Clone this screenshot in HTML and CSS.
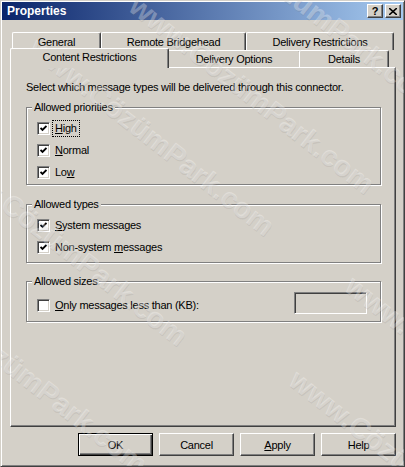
FILE: index.html
```html
<!DOCTYPE html>
<html lang="en">
<head>
	<meta charset="utf-8" />
	<title>Properties</title>
	<link rel="stylesheet" href="styles.css">
</head>
<body>
	<div class="window">
		<div class="titlebar">
			<span class="title">Properties</span>
			<span class="caption-btns">
				<span class="cap-btn">?</span>
				<span class="cap-btn cap-close">
					<svg viewBox="0 0 8 7" width="8" height="7"><path d="M0 0 L8 7 M8 0 L0 7" stroke="#000" stroke-width="1.6"/></svg>
				</span>
			</span>
		</div>

		<div class="tabs">
			<div class="tab-row back">
				<div class="tab" style="width:89px">General</div>
				<div class="tab" style="width:145px">Remote Bridgehead</div>
				<div class="tab" style="width:148px">Delivery Restrictions</div>
			</div>
			<div class="tab-row front">
				<div class="tab selected" style="width:159px">Content Restrictions</div>
				<div class="tab" style="width:134px">Delivery Options</div>
				<div class="tab" style="width:90px">Details</div>
			</div>
		</div>

		<div class="panel">
			<p class="intro">Select which message types will be delivered through this connector.</p>

			<div class="group g-priorities">
				<div class="group-title">Allowed priorities</div>
				<div class="check-row"><span class="checkbox on"></span><span class="label focus"><u>H</u>igh</span></div>
				<div class="check-row"><span class="checkbox on"></span><span class="label"><u>N</u>ormal</span></div>
				<div class="check-row"><span class="checkbox on"></span><span class="label">Lo<u>w</u></span></div>
			</div>

			<div class="group g-types">
				<div class="group-title">Allowed types</div>
				<div class="check-row"><span class="checkbox on"></span><span class="label"><u>S</u>ystem messages</span></div>
				<div class="check-row"><span class="checkbox on"></span><span class="label">Non-system <u>m</u>essages</span></div>
			</div>

			<div class="group g-sizes">
				<div class="group-title">Allowed sizes</div>
				<div class="check-row size-row">
					<span class="checkbox"></span><span class="label"><u>O</u>nly messages less than (KB):</span>
					<span class="textbox"></span>
				</div>
			</div>
		</div>

		<div class="buttons">
			<button class="btn default">OK</button>
			<button class="btn">Cancel</button>
			<button class="btn"><u>A</u>pply</button>
			<button class="btn">Help</button>
		</div>

		<!-- watermark of the source image -->
		<div class="watermark">
			<span class="wm" style="left:205px; top:-95px">www.CözümPark.com</span>
			<span class="wm" style="left:142px; top:-12px">www.CözümPark.com</span>
			<span class="wm" style="left:42px; top:30px">www.CözümPark.com</span>
			<span class="wm" style="left:-45px; top:140px">www.CözümPark.com</span>
			<span class="wm" style="left:-85px; top:268px">www.CözümPark.com</span>
			<span class="wm" style="left:358px; top:268px">www.CözümPark.com</span>
			<span class="wm" style="left:302px; top:362px">www.CözümPark.com</span>
		</div>
	</div>
</body>
</html>
```

FILE: styles.css
```css
body {margin:0; padding:0; font-family:"Liberation Sans",Arial,sans-serif; font-size:11px; letter-spacing:-0.25px; color:#000; background:#d4d0c8;}
u {text-decoration:underline; text-underline-offset:1px;}

.window {position:relative; width:405px; height:467px; box-sizing:border-box; padding:1px; overflow:hidden;
	border:1px solid; border-color:#d4d0c8 #404040 #404040 #d4d0c8; box-shadow:inset 1px 1px #fff, inset -1px -1px #808080;}

/* title bar */
.titlebar {display:flex; justify-content:space-between; align-items:center; height:18px; padding:0 2px 0 5px;
	background:linear-gradient(to right,#0a246a,#a6caf0);}
.title {color:#fff; font-weight:bold; font-size:12px; letter-spacing:0;}
.caption-btns {display:flex; gap:2px;}
.cap-btn {display:flex; justify-content:center; align-items:center; width:16px; height:14px; box-sizing:border-box;
	background:#d4d0c8; font-weight:bold; font-size:11px; line-height:1;
	border:1px solid; border-color:#fff #404040 #404040 #fff; box-shadow:inset -1px -1px #808080;}

/* tabs */
.tabs {margin:12px 0 0 8px;}
.tab-row {display:flex; height:18px;}
.tab-row.back {padding-left:2px;}
.tab-row.front {height:17px; align-items:flex-end;}
.tab {display:flex; justify-content:center; align-items:center; box-sizing:border-box; height:18px; background:#d4d0c8;
	border-top:1px solid #fff; border-left:1px solid #fff; border-right:1px solid #404040; border-top-left-radius:2px; border-top-right-radius:2px;
	box-shadow:inset -1px 0 #808080;}
.tab-row.front .tab {height:17px; padding-bottom:1px;}
.tab-row.front .tab.selected {position:relative; z-index:1; height:20px; margin-bottom:-1px; padding-bottom:4px;}
.tab-row.front .tab + .tab {margin-left:-2px;}

/* panel */
.panel {box-sizing:border-box; width:386px; height:360px; margin-left:8px; padding:13px 14px 0 15px;
	border:1px solid; border-color:#fff #404040 #404040 #fff; box-shadow:inset -1px -1px #808080;}
.intro {margin:0; line-height:13px;}

.group {box-sizing:border-box; width:355px; border:1px solid #808080; box-shadow:inset 1px 1px #fff, 1px 1px #fff;}
.group-title {width:fit-content; margin:-7px 0 0 5px; padding:0 2px; line-height:13px; background:#d4d0c8;}
.g-priorities {margin-top:13px; padding-bottom:1px;}
.g-types {margin-top:19px; padding-bottom:4px;}
.g-sizes {margin-top:18px; padding-bottom:3px;}
.g-priorities .group-title, .g-types .group-title {margin-bottom:3px;}

.check-row {display:flex; align-items:center; height:22px; padding-left:10px;}
.size-row {height:26px; margin-top:4px; padding-right:13px;}
.checkbox {width:13px; height:13px; box-sizing:border-box; background:#fff; display:flex; justify-content:center; align-items:center;
	border:1px solid; border-color:#808080 #fff #fff #808080; box-shadow:inset 1px 1px #404040, inset -1px -1px #d4d0c8;}
.checkbox.on::after {content:""; width:7px; height:7px;
	background:url("data:image/svg+xml,%3Csvg xmlns='http://www.w3.org/2000/svg' viewBox='0 0 7 7'%3E%3Cpath d='M0.5 3 L2.5 5 L6.5 1' fill='none' stroke='%23000' stroke-width='1.9'/%3E%3C/svg%3E") no-repeat;}
.label {margin-left:4px; line-height:13px; padding:0 1px;}
.label.focus {outline:1px dotted #000; outline-offset:1px;}
.textbox {align-self:flex-start; margin-left:auto; width:73px; height:22px; box-sizing:border-box;
	border:1px solid; border-color:#808080 #fff #fff #808080; box-shadow:inset 1px 1px #404040, inset -1px -1px #d4d0c8;}

/* buttons */
.buttons {display:flex; justify-content:flex-end; gap:6px; width:386px; margin:6px 0 0 8px;}
.btn {width:75px; height:23px; padding:0; font:inherit; letter-spacing:inherit; color:#000; background:#d4d0c8;
	border:1px solid; border-color:#fff #404040 #404040 #fff; box-shadow:inset -1px -1px #808080;}
.btn.default {border:1px solid #000; box-shadow:inset 1px 1px #fff, inset -1px -1px #404040, inset -2px -2px #808080;}

/* watermark */
.watermark {position:absolute; inset:0; pointer-events:none;}
.wm {position:absolute; font-size:29px; font-weight:bold; letter-spacing:0; white-space:nowrap; transform:rotate(38deg); transform-origin:0 0;
	color:rgba(255,255,255,0.3); text-shadow:1px 1px rgba(110,110,110,0.12);}
```
